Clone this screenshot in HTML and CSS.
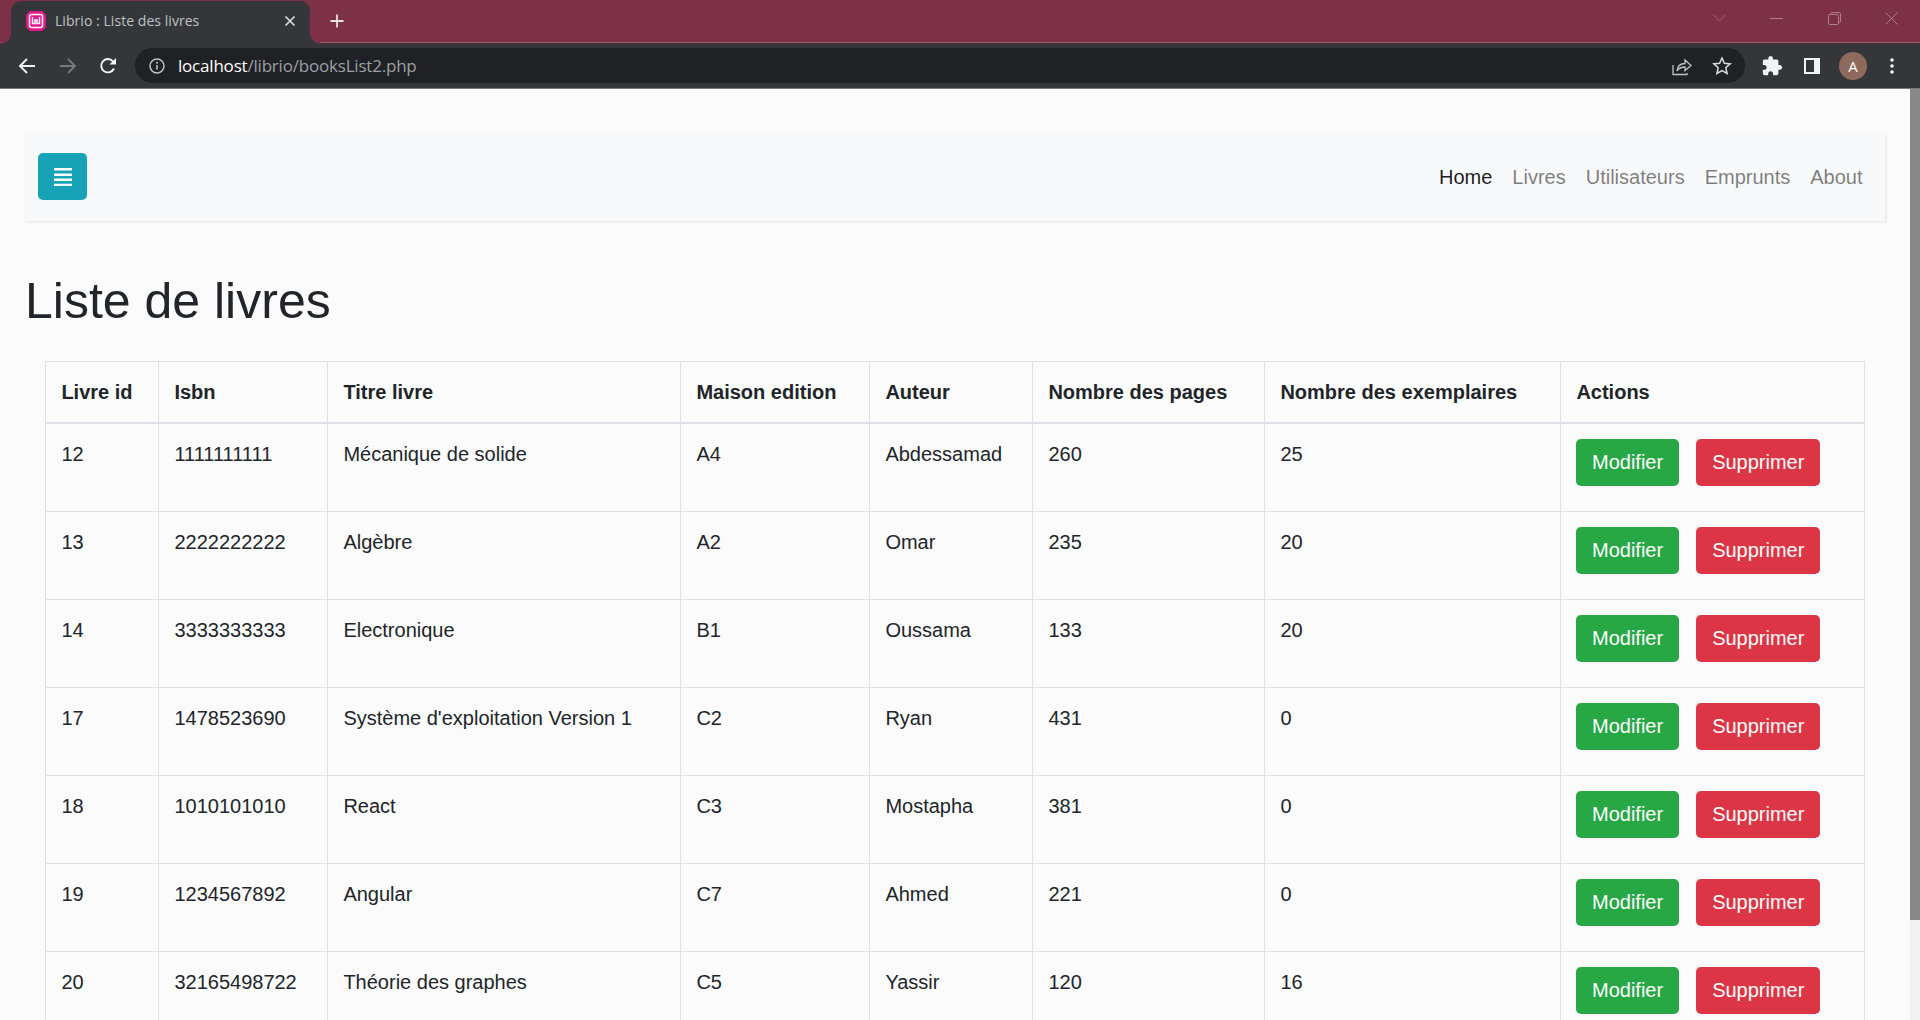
FILE: index.html
```html
<!DOCTYPE html>
<html lang="fr">
<head>
  <meta charset="UTF-8" />
  <title>Librio : Liste des livres</title>
  <link rel="stylesheet" href="styles.css">
</head>
<body>
  <!-- browser frame -->
  <div class="tabstrip">
    <div class="tab">
      <svg class="favicon" viewBox="0 0 20 20" width="20" height="20">
        <path d="M4 0h12l4 4v12l-4 4H4l-4-4V4z" fill="#e6168c"/>
        <rect x="3.500" y="3.500" width="13" height="13" rx="2" fill="none" stroke="#fff" stroke-width="1.500"/>
        <path d="M6.500 6v6.500h2.500V9h2v3.500h2.500V6" fill="none" stroke="#fff" stroke-width="1.500"/>
      </svg>
      <span class="tab-title">Librio : Liste des livres</span>
      <svg class="tab-close" viewBox="0 0 12 12" width="12" height="12">
        <path d="M1.500 1.500l9 9M10.500 1.500l-9 9" stroke="#dadce0" stroke-width="1.700"/>
      </svg>
    </div>
    <svg class="new-tab" viewBox="0 0 16 16" width="16" height="16">
      <path d="M8 1.500v13M1.500 8h13" stroke="#eadfe0" stroke-width="1.800"/>
    </svg>
    <div class="win-controls">
      <svg viewBox="0 0 13 8" width="13" height="8"><path d="M.5 1l6 6 6-6" fill="none" stroke="#a9667c" stroke-width="1"/></svg>
      <svg viewBox="0 0 13 13" width="13" height="13"><path d="M0 6.500h13" stroke="#b07c8c" stroke-width="1"/></svg>
      <svg viewBox="0 0 13 13" width="13" height="13"><path d="M2.500 2V1.800A1.300 1.300 0 0 1 3.800.5h7.400A1.300 1.300 0 0 1 12.500 1.800v7.400a1.300 1.300 0 0 1-1.300 1.300H11" fill="none" stroke="#b07c8c"/><rect x=".5" y="2.500" width="10" height="10" rx="1.300" fill="none" stroke="#b07c8c"/></svg>
      <svg viewBox="0 0 13 13" width="13" height="13"><path d="M.5.500l12 12M12.500.500l-12 12" stroke="#b07c8c" stroke-width="1"/></svg>
    </div>
  </div>

  <div class="toolbar">
    <svg class="tool back" viewBox="0 0 18 18" width="18" height="18"><path d="M17 9H2.500M9 2L2 9l7 7" fill="none" stroke="#f1f3f4" stroke-width="1.900"/></svg>
    <svg class="tool forward" viewBox="0 0 18 18" width="18" height="18"><path d="M1 9h14.500M9 2l7 7-7 7" fill="none" stroke="#77787b" stroke-width="1.900"/></svg>
    <svg class="tool reload" viewBox="0 0 18 18" width="18" height="18"><path d="M15 11.500A6.700 6.700 0 1 1 14.300 4.700" fill="none" stroke="#f1f3f4" stroke-width="1.900"/><path d="M17 1v6.500h-6.500z" fill="#f1f3f4"/></svg>
    <div class="omnibox">
      <svg class="info" viewBox="0 0 16 16" width="16" height="16"><circle cx="8" cy="8" r="7" fill="none" stroke="#bdc1c6" stroke-width="1.500"/><path d="M8 7v4.500" stroke="#bdc1c6" stroke-width="1.600"/><circle cx="8" cy="4.800" r="1" fill="#bdc1c6"/></svg>
      <span class="url"><span class="host">localhost</span>/librio/booksList2.php</span>
      <svg class="share" viewBox="0 0 20 20" width="20" height="20"><path d="M1 9v9.500h14v-1.500" fill="none" stroke="#bdc1c6" stroke-width="1.300"/><path d="M5 15c.5-5 3.500-7.500 8-7.500V4l6 5.500-6 5V11c-3.500 0-6 1-8 4z" fill="none" stroke="#bdc1c6" stroke-width="1.300"/></svg>
      <svg class="star" viewBox="0 0 20 20" width="20" height="20"><path d="M10 2l2.400 5.300 5.800.6-4.400 3.900 1.300 5.700-5.100-3-5.100 3 1.300-5.700-4.400-3.900 5.800-.6z" fill="none" stroke="#dadce0" stroke-width="1.500"/></svg>
    </div>
    <svg class="tool puzzle" viewBox="0 0 24 24" width="22" height="22"><path d="M20.500 11H19V7c0-1.100-.9-2-2-2h-4V3.500C13 2.120 11.880 1 10.500 1S8 2.120 8 3.500V5H4c-1.100 0-1.990.9-1.990 2v3.800H3.500c1.490 0 2.700 1.210 2.700 2.700s-1.210 2.700-2.700 2.700H2V20c0 1.100.9 2 2 2h3.800v-1.500c0-1.490 1.210-2.700 2.700-2.700 1.490 0 2.700 1.210 2.700 2.700V22H17c1.100 0 2-.9 2-2v-4h1.500c1.380 0 2.500-1.120 2.500-2.500S21.880 11 20.500 11z" fill="#f1f3f4"/></svg>
    <svg class="tool panel" viewBox="0 0 18 18" width="18" height="18"><rect x="1" y="1" width="16" height="16" fill="#f1f3f4"/><rect x="3" y="3" width="8" height="12" fill="#35363a"/></svg>
    <div class="avatar">A</div>
    <svg class="tool dots" viewBox="0 0 4 16" width="4" height="16"><circle cx="2" cy="2" r="1.800" fill="#f1f3f4"/><circle cx="2" cy="8" r="1.800" fill="#f1f3f4"/><circle cx="2" cy="14" r="1.800" fill="#f1f3f4"/></svg>
  </div>

  <!-- page -->
  <div class="viewport">
    <main class="content">
      <nav class="navbar">
        <button class="btn btn-info toggle">
          <svg viewBox="0 0 18 18" width="18" height="18"><path d="M0 1.200h18M0 6.700h18M0 11.800h18M0 17h18" stroke="#fff" stroke-width="2.400"/></svg>
        </button>
        <ul class="nav">
          <li class="active">Home</li>
          <li>Livres</li>
          <li>Utilisateurs</li>
          <li>Emprunts</li>
          <li>About</li>
        </ul>
      </nav>

      <h1>Liste de livres</h1>

      <table class="books">
        <colgroup>
          <col class="c1"><col class="c2"><col class="c3"><col class="c4">
          <col class="c5"><col class="c6"><col class="c7"><col class="c8">
        </colgroup>
        <thead>
          <tr>
            <th>Livre id</th><th>Isbn</th><th>Titre livre</th><th>Maison edition</th>
            <th>Auteur</th><th>Nombre des pages</th><th>Nombre des exemplaires</th><th>Actions</th>
          </tr>
        </thead>
        <tbody>
          <tr><td>12</td><td>1111111111</td><td>Mécanique de solide</td><td>A4</td><td>Abdessamad</td><td>260</td><td>25</td><td><div class="actions"><a class="btn btn-success">Modifier</a><a class="btn btn-danger">Supprimer</a></div></td></tr>
          <tr><td>13</td><td>2222222222</td><td>Algèbre</td><td>A2</td><td>Omar</td><td>235</td><td>20</td><td><div class="actions"><a class="btn btn-success">Modifier</a><a class="btn btn-danger">Supprimer</a></div></td></tr>
          <tr><td>14</td><td>3333333333</td><td>Electronique</td><td>B1</td><td>Oussama</td><td>133</td><td>20</td><td><div class="actions"><a class="btn btn-success">Modifier</a><a class="btn btn-danger">Supprimer</a></div></td></tr>
          <tr><td>17</td><td>1478523690</td><td>Système d'exploitation Version 1</td><td>C2</td><td>Ryan</td><td>431</td><td>0</td><td><div class="actions"><a class="btn btn-success">Modifier</a><a class="btn btn-danger">Supprimer</a></div></td></tr>
          <tr><td>18</td><td>1010101010</td><td>React</td><td>C3</td><td>Mostapha</td><td>381</td><td>0</td><td><div class="actions"><a class="btn btn-success">Modifier</a><a class="btn btn-danger">Supprimer</a></div></td></tr>
          <tr><td>19</td><td>1234567892</td><td>Angular</td><td>C7</td><td>Ahmed</td><td>221</td><td>0</td><td><div class="actions"><a class="btn btn-success">Modifier</a><a class="btn btn-danger">Supprimer</a></div></td></tr>
          <tr><td>20</td><td>32165498722</td><td>Théorie des graphes</td><td>C5</td><td>Yassir</td><td>120</td><td>16</td><td><div class="actions"><a class="btn btn-success">Modifier</a><a class="btn btn-danger">Supprimer</a></div></td></tr>
        </tbody>
      </table>
    </main>
    <div class="scrollbar"><div class="thumb"></div></div>
  </div>
</body>
</html>
```

FILE: styles.css
```css
* { box-sizing: border-box; }
html, body {
  margin: 0;
  padding: 0;
  height: 1020px;
  overflow: hidden;
}
body {
  font-family: 'Liberation Sans', Arial, sans-serif;
  font-size: 20px;
  line-height: 30px;
  color: #212529;
  background: #fbfbfc;
}

/* browser frame */
.tabstrip {
  height: 43px;
  background: #7c3146;
  border-bottom: 1px solid #a5566c;
  display: flex;
  align-items: flex-start;
  padding-left: 11px;
}
.tab {
  position: relative;
  width: 299px;
  height: 43px;
  margin-top: 1px;
  background: #35363a;
  border-radius: 10px 10px 0 0;
  display: flex;
  align-items: center;
  padding: 0 14px 4px 15px;
  font-family: 'Open Sans', sans-serif;
  font-size: 14px;
  letter-spacing: 0.05px;
  color: #bdc1c6;
}
.tab::before, .tab::after {
  content: "";
  position: absolute;
  bottom: 0;
  width: 10px;
  height: 10px;
}
.tab::before {
  left: -10px;
  background: radial-gradient(circle at 0 0, #7c3146 9.500px, #35363a 10px);
}
.tab::after {
  right: -10px;
  background: radial-gradient(circle at 100% 0, #7c3146 9.500px, #35363a 10px);
}
.tab-title { margin-left: 9px; flex: 1; white-space: nowrap; }
.new-tab { margin: 13px 0 0 19px; }
.win-controls {
  margin-left: auto;
  display: flex;
  align-items: center;
  height: 36px;
  gap: 44.300px;
  padding-right: 22px;
}
.toolbar {
  height: 46px;
  background: #35363a;
  border-bottom: 1px solid #77787b;
  display: flex;
  align-items: center;
  padding-left: 18px;
}
.tool { flex: none; }
.forward { margin-left: 23px; }
.reload { margin-left: 22px; }
.omnibox {
  width: 1610px;
  height: 35px;
  margin-left: 18px;
  background: #202124;
  border-radius: 18px;
  display: flex;
  align-items: center;
  padding: 0 13px 0 14px;
  font-family: 'Open Sans', sans-serif;
  font-size: 17px;
  letter-spacing: -0.2px;
  color: #9aa0a6;
}
.url { margin-left: 13px; flex: 1; white-space: nowrap; }
.host { color: #fff; }
.share { margin-right: 20px; }
.puzzle { margin-left: 16px; }
.panel { margin-left: 20px; }
.avatar {
  width: 28px;
  height: 28px;
  margin-left: 18px;
  border-radius: 50%;
  background: #8d6a5c;
  color: #fff;
  font-family: 'Open Sans', sans-serif;
  font-size: 15px;
  line-height: 28px;
  text-align: center;
}
.dots { margin-left: 23px; }

/* page */
.viewport {
  display: flex;
  height: 931px;
}
.content {
  flex: 1;
  overflow: hidden;
  padding: 44px 25px 0;
}
.scrollbar {
  width: 10px;
  background: #f1f1f1;
}
.thumb {
  height: 831px;
  background: #888;
}
.navbar {
  height: 88px;
  background: #f8f9fa;
  box-shadow: 1px 1px 3px rgba(0, 0, 0, 0.1);
  display: flex;
  justify-content: space-between;
  align-items: center;
  padding: 0 12.500px 0 13px;
}
.nav {
  display: flex;
  list-style: none;
  margin: 0;
  padding: 0;
  color: rgba(0, 0, 0, 0.5);
}
.nav li { padding: 10px; }
.nav .active { color: rgba(0, 0, 0, 0.9); }
h1 {
  margin: 50px 0 30px;
  font-size: 50px;
  font-weight: 400;
  line-height: 60px;
}
.btn {
  display: inline-block;
  padding: 7px 15px 8px;
  height: 47px;
  border: 1px solid transparent;
  border-radius: 5px;
  color: #fff;
  font: inherit;
}
.toggle {
  display: flex;
  align-items: center;
  justify-content: center;
  width: 49px;
  margin-bottom: 1px;
  padding: 0;
  background: #17a2b8;
}
.btn-success { background: #28a745; }
.btn-danger { background: #dc3545; }
.actions {
  display: flex;
  gap: 17px;
  margin-left: -0.400px;
}

.books {
  width: 1820px;
  margin-left: 20px;
  table-layout: fixed;
  border-collapse: separate;
  border-spacing: 0;
}
.c1 { width: 113px; }
.c2 { width: 169px; }
.c3 { width: 353px; }
.c4 { width: 189px; }
.c5 { width: 163px; }
.c6 { width: 232px; }
.c7 { width: 296px; }
.c8 { width: 305px; }
.books th, .books td {
  border-left: 1px solid #dee2e6;
  padding: 15px 15px 15px 15.400px;
  text-align: left;
  vertical-align: top;
  white-space: nowrap;
}
.books th:last-child, .books td:last-child { border-right: 1px solid #dee2e6; }
.books th {
  height: 63px;
  border-top: 1px solid #dee2e6;
  border-bottom: 2px solid #dee2e6;
}
.books td {
  height: 88px;
  border-bottom: 1px solid #dee2e6;
}
```
